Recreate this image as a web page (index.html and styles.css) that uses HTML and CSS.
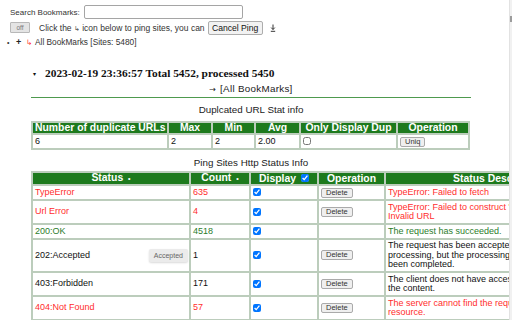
FILE: index.html
```html
<!DOCTYPE html>
<html lang="en">
<head>
    <meta charset="UTF-8">
    <title>Bookmarks Ping</title>
    <link rel="stylesheet" href="styles.css">
</head>
<body>
<div class="window">
    <div class="page">
        <div class="toolbar">
            <div class="search-row">
                <label for="q">Search Bookmarks:</label>
                <input id="q" class="search" type="text">
            </div>
            <div class="ping-row">
                <button class="off-btn">off</button>
                <span class="hint">Click the <span class="hook">&#8627;</span> icon below to ping sites, you can</span>
                <button class="cancel-btn">Cancel Ping</button>
                <svg class="dl-icon" width="6" height="8" viewBox="0 0 6 8"><path d="M3 0.5v5M1.2 3.6L3 5.5 4.8 3.6M0.8 7.3h4.4" stroke="#333" stroke-width="1" fill="none"/></svg>
            </div>
            <div class="tree">
                <span class="dot">&bull;</span>
                <span class="plus">+</span>
                <span class="hook red">&#8627;</span>
                <span class="tree-label">All BookMarks [Sites: 5480]</span>
            </div>
        </div>

        <div class="report">
            <div class="report-head">
                <div class="stamp"><span class="caret">&#9662;</span>2023-02-19 23:36:57 Total 5452, processed 5450</div>
                <div class="back-link"><span class="arrow">&rarr;</span> [All BookMarks]</div>
            </div>

            <div class="caption">Duplcated URL Stat info</div>
            <table class="grid dup">
                <colgroup>
                    <col style="width:136px"><col style="width:44px"><col style="width:43px">
                    <col style="width:45px"><col style="width:97px"><col style="width:72px">
                </colgroup>
                <thead>
                    <tr>
                        <th>Number of duplicate URLs</th>
                        <th>Max</th>
                        <th>Min</th>
                        <th>Avg</th>
                        <th>Only Display Dup</th>
                        <th>Operation</th>
                    </tr>
                </thead>
                <tbody>
                    <tr>
                        <td>6</td>
                        <td>2</td>
                        <td>2</td>
                        <td>2.00</td>
                        <td><input type="checkbox" class="box"></td>
                        <td class="ops"><button class="small-btn">Uniq</button></td>
                    </tr>
                </tbody>
            </table>

            <div class="caption second">Ping Sites Http Status Info</div>
            <table class="grid status">
                <colgroup>
                    <col style="width:158px"><col style="width:60px"><col style="width:68px">
                    <col style="width:67px"><col style="width:228px">
                </colgroup>
                <thead>
                    <tr>
                        <th>Status <span class="sort">&bull;</span></th>
                        <th>Count <span class="sort">&bull;</span></th>
                        <th>Display <input type="checkbox" class="box head-box" checked></th>
                        <th>Operation</th>
                        <th>Status Description</th>
                    </tr>
                </thead>
                <tbody>
                    <tr class="err">
                        <td>TypeError</td>
                        <td>635</td>
                        <td><input type="checkbox" class="box" checked></td>
                        <td class="ops"><button class="small-btn">Delete</button></td>
                        <td><div class="desc">TypeError: Failed to fetch</div></td>
                    </tr>
                    <tr class="err">
                        <td>Url Error</td>
                        <td>4</td>
                        <td><input type="checkbox" class="box" checked></td>
                        <td class="ops"><button class="small-btn">Delete</button></td>
                        <td><div class="desc">TypeError: Failed to construct 'URL': Invalid URL</div></td>
                    </tr>
                    <tr class="ok">
                        <td>200:OK</td>
                        <td>4518</td>
                        <td><input type="checkbox" class="box" checked></td>
                        <td class="ops"></td>
                        <td><div class="desc">The request has succeeded.</div></td>
                    </tr>
                    <tr>
                        <td class="with-tip">202:Accepted<span class="tip">Accepted</span></td>
                        <td>1</td>
                        <td><input type="checkbox" class="box" checked></td>
                        <td class="ops"><button class="small-btn">Delete</button></td>
                        <td><div class="desc">The request has been accepted for processing, but the processing has not been completed.</div></td>
                    </tr>
                    <tr>
                        <td>403:Forbidden</td>
                        <td>171</td>
                        <td><input type="checkbox" class="box" checked></td>
                        <td class="ops"><button class="small-btn">Delete</button></td>
                        <td><div class="desc">The client does not have access rights to the content.</div></td>
                    </tr>
                    <tr class="err">
                        <td>404:Not Found</td>
                        <td>57</td>
                        <td><input type="checkbox" class="box" checked></td>
                        <td class="ops"><button class="small-btn">Delete</button></td>
                        <td><div class="desc">The server cannot find the requested resource.</div></td>
                    </tr>
                </tbody>
            </table>
        </div>
    </div>
    <div class="scrollbar"><div class="thumb"></div></div>
</div>
</body>
</html>
```

FILE: styles.css
```css
body {
    margin: 0;
    font-family: "Liberation Sans", Arial, sans-serif;
    background-color: #fff;
}
.window {
    display: flex;
    width: 512px;
    height: 320px;
    overflow: hidden;
}
.page {
    flex: none;
    width: 509px;
    overflow: hidden;
}
.scrollbar {
    flex: none;
    width: 2px;
    background-color: #f1f1f1;
    border-left: 1px solid #e2e2e2;
}
.thumb {
    height: 6px;
    margin-top: 16px;
    background-color: #9c9c9c;
}

/* top controls */
.toolbar {
    padding: 5px 0 0 10px;
    font-size: 8px;
    color: #333;
}
.search-row {
    display: flex;
    align-items: center;
    gap: 4px;
    height: 14px;
}
.search {
    width: 159px;
    height: 14px;
    box-sizing: border-box;
    border: 1px solid #a5a5a5;
    border-radius: 2px;
    padding: 0;
}
.ping-row {
    display: flex;
    align-items: center;
    height: 15px;
    margin-top: 1px;
}
.off-btn {
    width: 20px;
    height: 11px;
    padding: 0;
    font-size: 6.5px;
    color: #777;
    background-color: #e4e4e4;
    border: 1px solid #b8b8b8;
    border-radius: 1px;
    font-family: inherit;
}
.hint {
    margin-left: 9px;
    font-size: 8.5px;
}
.hook {
    font-family: "DejaVu Sans", sans-serif;
    font-size: 7px;
    color: #555;
}
.hook.red {
    color: #ff3030;
    font-size: 7.5px;
}
.cancel-btn {
    margin-left: 3px;
    width: 55px;
    height: 14px;
    padding: 0;
    font-size: 8.6px;
    font-family: inherit;
    color: #111;
    background-color: #f2f2f2;
    border: 1px solid #adadad;
    border-radius: 2px;
}
.dl-icon {
    margin-left: 7px;
}
.tree {
    display: flex;
    align-items: center;
    height: 10px;
    margin-top: 2px;
    margin-left: -3px;
}
.tree-label {
    font-size: 8.3px;
}
.dot {
    font-size: 7px;
    width: 9px;
}
.plus {
    font-weight: bold;
    font-size: 9px;
    color: #222;
    width: 10px;
}
.tree .hook {
    width: 9px;
}

/* report */
.report {
    margin-left: 31px;
    width: 440px;
}
.report-head {
    margin-top: 19px;
    border-bottom: 1.5px solid #4e9a4e;
    padding-bottom: 2px;
}
.stamp {
    font-family: "Liberation Serif", "Times New Roman", serif;
    font-weight: bold;
    font-size: 11.4px;
    line-height: 14px;
    padding-left: 2px;
    color: #111;
}
.caret {
    display: inline-block;
    width: 12px;
    font-size: 6px;
    font-family: "DejaVu Sans", sans-serif;
    vertical-align: 1px;
}
.back-link {
    text-align: center;
    font-size: 9.8px;
    letter-spacing: 0.3px;
    line-height: 10px;
    margin-top: 3px;
    color: #222;
}
.arrow {
    font-family: "DejaVu Sans", sans-serif;
    font-size: 8px;
    letter-spacing: 0;
    margin-right: 1px;
}
.caption {
    text-align: center;
    font-size: 9.8px;
    line-height: 10px;
    margin-top: 7px;
    margin-bottom: 6px;
    color: #222;
}
.caption.second {
    margin-top: 8px;
    margin-bottom: 3px;
}

/* tables */
.grid {
    border-collapse: separate;
    border-spacing: 0;
    border: 1px solid #bccdbc;
    table-layout: fixed;
    font-size: 9px;
    line-height: 9.5px;
}
.grid.dup {
    width: 439px;
}
.grid.status {
    width: 581px;
}
.grid th,
.grid td {
    border: 1px solid #bccdbc;
    padding: 1.5px 2px;
    text-align: left;
}
.grid th {
    background-color: #1d7a1d;
    color: #fff;
    font-size: 10.4px;
    line-height: 10px;
    padding: 0 2px;
    text-align: center;
    white-space: nowrap;
}
.grid td {
    color: #111;
}
.sort {
    font-size: 7px;
    margin-left: 2px;
}
.box {
    width: 8px;
    height: 8px;
    margin: 0;
    vertical-align: middle;
}
.head-box {
    margin-left: 2px;
    vertical-align: 0;
}
.ops {
    padding-left: 3px;
}
.small-btn {
    height: 10px;
    padding: 0 4px;
    font-size: 7.5px;
    font-family: inherit;
    line-height: 8px;
    color: #333;
    background-color: #efefef;
    border: 1px solid #aaa;
    border-radius: 2px;
    vertical-align: middle;
}
.err td {
    color: #ff2d2d;
}
.ok td {
    color: #2b7d2b;
}
.desc {
    width: 168px;
}
.with-tip {
    position: relative;
}
.tip {
    position: absolute;
    right: 1px;
    top: 50%;
    margin-top: -6px;
    padding: 2px 5px;
    font-size: 7px;
    line-height: 9px;
    color: #666;
    background-color: #ebebeb;
    border-radius: 2px;
    box-shadow: 0 1px 2px rgba(0, 0, 0, 0.15);
}
```
